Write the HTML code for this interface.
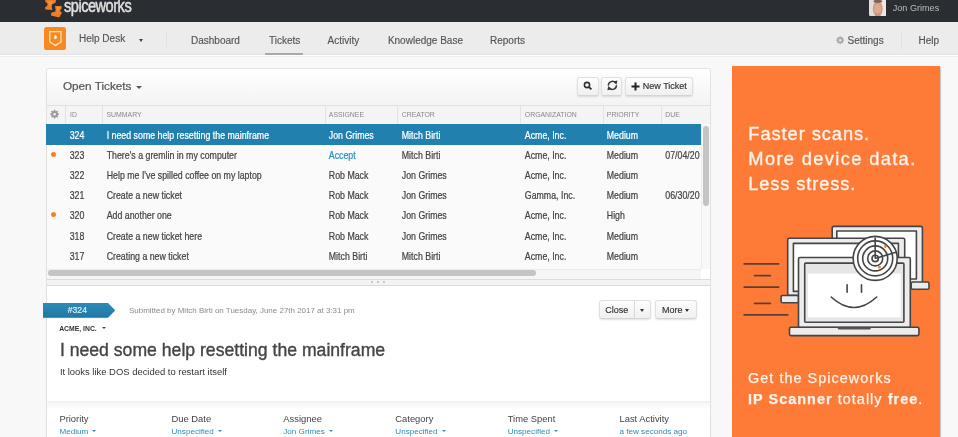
<!DOCTYPE html>
<html><head><meta charset="utf-8">
<style>
*{box-sizing:border-box;margin:0;padding:0}
html,body{width:958px;height:437px;overflow:hidden}
#wrap{position:absolute;left:0;top:0;width:958px;height:437px;filter:blur(0.3px)}
body{font-family:"Liberation Sans",sans-serif;background:#f8f8f8;position:relative;color:#333}
.a{position:absolute;white-space:nowrap}
#hdr{position:absolute;left:0;top:0;width:958px;height:22px;background:#2a2e32}
#nav{position:absolute;left:0;top:22px;width:958px;height:32.5px;background:#ececec;border-bottom:0.8px solid #e2e2e2}
#navline{position:absolute;left:0;top:55px;width:958px;height:1.4px;background:#fff}
#navsh{position:absolute;left:0;top:56.4px;width:958px;height:1px;background:#eeeeee}
.nv{position:absolute;font-size:10px;line-height:12px;color:#555;white-space:nowrap;margin-top:1px;-webkit-text-stroke:0.15px #555}
#panel{position:absolute;left:46px;top:68px;width:665px;height:390px;background:#fff;border:1px solid #e2e2e2;border-radius:3px;box-shadow:0 0 1px rgba(0,0,0,.05)}
#phead{position:absolute;left:47px;top:69px;width:663px;height:37px;background:linear-gradient(#fff,#f3f3f3);border-bottom:1px solid #e2e2e2;border-radius:3px 3px 0 0}
#colh{position:absolute;left:47px;top:106px;width:663px;height:17.5px;background:#f4f4f4}
.sep{position:absolute;top:106px;width:1px;height:17.5px;background:#e3e3e3}
.chx{position:absolute;top:106px;line-height:17.5px;font-size:6.9px;color:#888;white-space:nowrap;transform:scaleY(1.14);transform-origin:0 55%;margin-top:0.3px}
#tbody{position:absolute;left:47px;top:123.5px;width:653.5px;height:145px;background:#fafafa}
.row{position:absolute;left:46px;width:654.5px}
.row.sel{background:#2180ae}
.ct{position:absolute;font-size:8.8px;line-height:20.2px;color:#444;white-space:nowrap;margin-top:2.2px;-webkit-text-stroke-width:0.2px;transform:scaleY(1.15);transform-origin:0 54%}
.ct.w{color:#fff}
.ct.acc{color:#2a8bc4}
.dot{position:absolute;left:51px;width:5.4px;height:5.4px;border-radius:50%;background:#fb7d2a}
#vtrack{position:absolute;left:700.5px;top:123.5px;width:9.5px;height:145px;background:#f8f8f8;border-left:1px solid #ececec}
#vthumb{position:absolute;left:703.4px;top:126px;width:5.6px;height:80px;border-radius:3px;background:#c4c4c4}
#htrack{position:absolute;left:47px;top:268.5px;width:653.5px;height:10.5px;background:#f6f6f6;border-top:1px solid #ececec}
#hthumb{position:absolute;left:48px;top:270.2px;width:488px;height:6px;border-radius:3px;background:#c4c4c4}
#corner{position:absolute;left:700.5px;top:268.5px;width:9.5px;height:10.5px;background:#fff}
#resz{position:absolute;left:47px;top:279px;width:663px;height:6.5px;background:#f3f3f3;border-top:1px solid #dcdcdc;border-bottom:1px solid #dcdcdc}
.rdot{position:absolute;top:281.3px;width:2.2px;height:2.2px;background:#bbb;border-radius:50%}
.btn{position:absolute;border:1px solid #e0e0e0;border-bottom-color:#d4d4d4;border-radius:3px;background:linear-gradient(#fdfdfd,#f0f0f0);box-shadow:0 1px 2px rgba(0,0,0,.12)}
.bt{position:absolute;font-size:9px;line-height:12px;color:#333;white-space:nowrap;-webkit-text-stroke:0.15px #333}
#ad{position:absolute;left:731.5px;top:66.2px;width:208.7px;height:380px;background:#fe7a37;box-shadow:1px 1px 1px rgba(0,0,0,.18)}
.adt{position:absolute;left:748.3px;color:#fff3ea;white-space:nowrap;font-size:18.3px;line-height:20px;letter-spacing:1.35px;-webkit-text-stroke:0.35px #fff3ea}
.adb{position:absolute;left:748px;color:#fff3ea;white-space:nowrap;font-size:14.4px;line-height:16px;letter-spacing:1.05px;-webkit-text-stroke:0.25px #fff3ea}
.fl{position:absolute;font-size:9.4px;line-height:12px;color:#444;white-space:nowrap}
.fv{position:absolute;font-size:8.1px;line-height:10px;color:#2a8bc4;white-space:nowrap;margin-top:0.5px}
.caret{position:absolute;width:0;height:0;border-left:2.6px solid transparent;border-right:2.6px solid transparent;border-top:2.8px solid #444}
.ic{display:inline-block;vertical-align:middle;width:0;height:0;border-left:2.5px solid transparent;border-right:2.5px solid transparent;border-top:2.6px solid #2a8bc4;margin-left:4px;margin-top:-1px}
</style></head><body><div id="wrap">
<!-- header -->
<div id="hdr"></div>
<svg class="a" style="left:40px;top:0" width="24" height="20" viewBox="40 0 24 20">
 <g fill="#ee7d2a">
  <path d="M45.2 0 L56 0 L55.6 2.8 L52.2 4.2 L51.6 6.5 L52.4 9.9 L45.4 9.6 L45 7.6 L47.6 5.2 L47.2 3 L45.5 2.2 Z"/>
  <path d="M55 6.1 L61.8 5.9 L61.4 9 L59.8 10.6 L62 12.8 L59.2 17.6 L51 15.4 L51.2 12.8 L55.4 11.6 L55.6 9.6 Z"/>
 </g>
 <g fill="#f6a23a" opacity=".55"><path d="M48 1 L53 1 L50 8 Z"/><path d="M57 7 L60 7 L57 14 Z"/></g>
</svg>
<div class="a" style="left:64px;top:-2px;font-size:14.6px;line-height:18px;color:#e0e0e0;letter-spacing:-0.5px;-webkit-text-stroke:0.4px #e0e0e0;transform:scaleY(1.2);transform-origin:0 13.6px">spiceworks</div>
<svg class="a" style="left:869px;top:0" width="17.2" height="16.4" viewBox="0 0 17.2 16.4"><defs><clipPath id="av"><rect x="0" y="-2" width="17.2" height="18.4" rx="2.2"/></clipPath></defs><g clip-path="url(#av)"><rect x="0" y="-2" width="17.2" height="18.4" fill="#e2ddd8"/><rect x="11" y="-2" width="6.2" height="18.4" fill="#ebe8e4"/><ellipse cx="8.8" cy="8.8" rx="5" ry="7.4" fill="#cf9d82"/><ellipse cx="8.8" cy="1.3" rx="4.4" ry="1.5" fill="#7a6355"/><ellipse cx="8.8" cy="9" rx="3.6" ry="5" fill="#d9ab90"/><rect x="6" y="13.5" width="5.6" height="4" fill="#c99479"/></g></svg>
<div class="a" style="left:892.7px;top:2.5px;font-size:9.1px;line-height:11px;color:#b9babb">Jon Grimes</div>

<!-- nav -->
<div id="nav"></div>
<div id="navline"></div>
<div id="navsh"></div>
<div class="a" style="left:43.8px;top:27.1px;width:22.7px;height:22.7px;border-radius:2.5px;background:#f68a20"></div>
<svg class="a" style="left:43.8px;top:27.1px" width="23" height="23" viewBox="0 0 23 23">
 <path d="M5.8 4.6 H17 V15 L11.4 18.4 L5.8 15 Z" fill="none" stroke="#fde3c8" stroke-width="1.3"/>
 <path d="M11.4 7.6 C12.4 9 12.8 9.8 12.8 10.6 A1.4 1.4 0 0 1 10 10.6 C10 9.8 10.4 9 11.4 7.6 Z" fill="#fff"/>
</svg>
<div class="nv" style="left:79px;top:31.6px">Help Desk</div>
<div class="caret" style="left:138.6px;top:38.6px;border-left-width:2.8px;border-right-width:2.8px;border-top-width:3px;border-top-color:#444"></div>
<div class="a" style="left:166.3px;top:31px;width:1px;height:16px;background:#e2e2e2"></div>
<div class="nv" style="left:191px;top:33.5px">Dashboard</div>
<div class="nv" style="left:269px;top:33.5px">Tickets</div>
<div class="a" style="left:265.4px;top:52.5px;width:38px;height:2px;background:#a9a9a9"></div>
<div class="nv" style="left:327.6px;top:33.5px">Activity</div>
<div class="nv" style="left:387.9px;top:33.5px">Knowledge Base</div>
<div class="nv" style="left:490px;top:33.5px">Reports</div>
<svg class="a" style="left:830px;top:30px" width="20" height="20" viewBox="830 30 20 20"><path d="M844.14 39.50 L844.14 40.90 L843.23 40.86 L842.81 41.87 L843.48 42.49 L842.49 43.48 L841.87 42.81 L840.86 43.23 L840.90 44.14 L839.50 44.14 L839.54 43.23 L838.53 42.81 L837.91 43.48 L836.92 42.49 L837.59 41.87 L837.17 40.86 L836.26 40.90 L836.26 39.50 L837.17 39.54 L837.59 38.53 L836.92 37.91 L837.91 36.92 L838.53 37.59 L839.54 37.17 L839.50 36.26 L840.90 36.26 L840.86 37.17 L841.87 37.59 L842.49 36.92 L843.48 37.91 L842.81 38.53 L843.23 39.54 Z" fill="#a8a8a8"/><circle cx="840.2" cy="40.2" r="1.2" fill="#ececec"/></svg>
<div class="nv" style="left:847.5px;top:34px">Settings</div>
<div class="a" style="left:901px;top:31px;width:1px;height:18px;background:#e2e2e2"></div>
<div class="nv" style="left:918.5px;top:34px">Help</div>

<!-- panel -->
<div id="panel"></div>
<div id="phead"></div>
<div class="a" style="left:62.9px;top:79.4px;font-size:11.75px;line-height:14px;color:#555;-webkit-text-stroke:0.2px #555">Open Tickets</div>
<div class="caret" style="left:136.4px;top:86.2px;border-left-width:3px;border-right-width:3px;border-top-width:3.2px;border-top-color:#555"></div>

<div class="btn" style="left:577px;top:76.6px;width:21.7px;height:19.3px"></div>
<svg class="a" style="left:583px;top:81px" width="10" height="10" viewBox="0 0 10 10"><circle cx="4" cy="4" r="2.6" fill="none" stroke="#333" stroke-width="1.6"/><path d="M5.8 5.8 L8.4 8.4" stroke="#333" stroke-width="1.9"/></svg>
<div class="btn" style="left:601.3px;top:76.6px;width:21.2px;height:19.3px"></div>
<svg class="a" style="left:600px;top:76px" width="24" height="20" viewBox="600 76 24 20"><g fill="none" stroke="#3a3a3a" stroke-width="1.5"><path d="M615.6 83.0 A4 4 0 0 0 608.4 85.6"/><path d="M609.2 87.8 A4 4 0 0 0 616.4 85.2"/></g><path d="M613.2 81.6 L617.4 80.6 L616.6 84.8 Z M611.6 89.2 L607.4 90.2 L608.2 86 Z" fill="#3a3a3a"/></svg>
<div class="btn" style="left:624.8px;top:76.6px;width:67.8px;height:19.3px"></div>
<svg class="a" style="left:631px;top:82px" width="9" height="9" viewBox="0 0 9 9"><path d="M4.5 0.5 V8.5 M0.5 4.5 H8.5" stroke="#222" stroke-width="2"/></svg>
<div class="bt" style="left:642.8px;top:80px">New Ticket</div>

<div id="colh"></div>
<div class="sep" style="left:65.4px"></div>
<div class="sep" style="left:102.3px"></div>
<div class="sep" style="left:324.5px"></div>
<div class="sep" style="left:397.4px"></div>
<div class="sep" style="left:520.2px"></div>
<div class="sep" style="left:602.6px"></div>
<div class="sep" style="left:661.4px"></div>
<svg class="a" style="left:46px;top:106px" width="20" height="17" viewBox="46 106 20 17"><path d="M58.93 113.43 L58.93 114.97 L57.92 114.93 L57.46 116.03 L58.21 116.72 L57.12 117.81 L56.43 117.06 L55.33 117.52 L55.37 118.53 L53.83 118.53 L53.87 117.52 L52.77 117.06 L52.08 117.81 L50.99 116.72 L51.74 116.03 L51.28 114.93 L50.27 114.97 L50.27 113.43 L51.28 113.47 L51.74 112.37 L50.99 111.68 L52.08 110.59 L52.77 111.34 L53.87 110.88 L53.83 109.87 L55.37 109.87 L55.33 110.88 L56.43 111.34 L57.12 110.59 L58.21 111.68 L57.46 112.37 L57.92 113.47 Z" fill="#9a9a9a"/><circle cx="54.6" cy="114.2" r="1.3" fill="#f4f4f4"/></svg>
<div class="chx" style="left:70px">ID</div>
<div class="chx" style="left:106.5px">SUMMARY</div>
<div class="chx" style="left:328.8px">ASSIGNEE</div>
<div class="chx" style="left:401.8px">CREATOR</div>
<div class="chx" style="left:524.8px">ORGANIZATION</div>
<div class="chx" style="left:606.8px">PRIORITY</div>
<div class="chx" style="left:665.3px">DUE</div>

<div id="tbody"></div>
<div class="row sel" style="top:123.5px;height:21.5px"></div>
<div class="ct w" style="left:69.7px;top:123.5px">324</div>
<div class="ct w" style="left:106.7px;top:123.5px">I need some help resetting the mainframe</div>
<div class="ct w" style="left:328.8px;top:123.5px">Jon Grimes</div>
<div class="ct w" style="left:401.8px;top:123.5px">Mitch Birti</div>
<div class="ct w" style="left:524.8px;top:123.5px">Acme, Inc.</div>
<div class="ct w" style="left:606.8px;top:123.5px">Medium</div>
<div class="row" style="top:143.7px;height:20.2px"></div>
<div class="ct" style="left:69.7px;top:143.7px">323</div>
<div class="ct" style="left:106.7px;top:143.7px">There's a gremlin in my computer</div>
<div class="ct acc" style="left:328.8px;top:143.7px">Accept</div>
<div class="ct" style="left:401.8px;top:143.7px">Mitch Birti</div>
<div class="ct" style="left:524.8px;top:143.7px">Acme, Inc.</div>
<div class="ct" style="left:606.8px;top:143.7px">Medium</div>
<div class="ct" style="left:665.3px;top:143.7px">07/04/20</div>
<div class="dot" style="top:151.5px"></div>
<div class="row" style="top:163.9px;height:20.2px"></div>
<div class="ct" style="left:69.7px;top:163.9px">322</div>
<div class="ct" style="left:106.7px;top:163.9px">Help me I've spilled coffee on my laptop</div>
<div class="ct" style="left:328.8px;top:163.9px">Rob Mack</div>
<div class="ct" style="left:401.8px;top:163.9px">Jon Grimes</div>
<div class="ct" style="left:524.8px;top:163.9px">Acme, Inc.</div>
<div class="ct" style="left:606.8px;top:163.9px">Medium</div>
<div class="row" style="top:184.1px;height:20.2px"></div>
<div class="ct" style="left:69.7px;top:184.1px">321</div>
<div class="ct" style="left:106.7px;top:184.1px">Create a new ticket</div>
<div class="ct" style="left:328.8px;top:184.1px">Rob Mack</div>
<div class="ct" style="left:401.8px;top:184.1px">Jon Grimes</div>
<div class="ct" style="left:524.8px;top:184.1px">Gamma, Inc.</div>
<div class="ct" style="left:606.8px;top:184.1px">Medium</div>
<div class="ct" style="left:665.3px;top:184.1px">06/30/20</div>
<div class="row" style="top:204.3px;height:20.2px"></div>
<div class="ct" style="left:69.7px;top:204.3px">320</div>
<div class="ct" style="left:106.7px;top:204.3px">Add another one</div>
<div class="ct" style="left:328.8px;top:204.3px">Rob Mack</div>
<div class="ct" style="left:401.8px;top:204.3px">Jon Grimes</div>
<div class="ct" style="left:524.8px;top:204.3px">Acme, Inc.</div>
<div class="ct" style="left:606.8px;top:204.3px">High</div>
<div class="dot" style="top:212.1px"></div>
<div class="row" style="top:224.5px;height:20.2px"></div>
<div class="ct" style="left:69.7px;top:224.5px">318</div>
<div class="ct" style="left:106.7px;top:224.5px">Create a new ticket here</div>
<div class="ct" style="left:328.8px;top:224.5px">Rob Mack</div>
<div class="ct" style="left:401.8px;top:224.5px">Jon Grimes</div>
<div class="ct" style="left:524.8px;top:224.5px">Acme, Inc.</div>
<div class="ct" style="left:606.8px;top:224.5px">Medium</div>
<div class="row" style="top:244.7px;height:20.2px"></div>
<div class="ct" style="left:69.7px;top:244.7px">317</div>
<div class="ct" style="left:106.7px;top:244.7px">Creating a new ticket</div>
<div class="ct" style="left:328.8px;top:244.7px">Mitch Birti</div>
<div class="ct" style="left:401.8px;top:244.7px">Mitch Birti</div>
<div class="ct" style="left:524.8px;top:244.7px">Acme, Inc.</div>
<div class="ct" style="left:606.8px;top:244.7px">Medium</div>
<div id="vtrack"></div>
<div id="vthumb"></div>
<div id="htrack"></div>
<div id="hthumb"></div>
<div id="corner"></div>
<div id="resz"></div>
<div class="rdot" style="left:371.3px"></div>
<div class="rdot" style="left:376.9px"></div>
<div class="rdot" style="left:382.6px"></div>

<!-- detail -->
<svg class="a" style="left:43px;top:302.6px;overflow:visible" width="73" height="15" viewBox="0 0 73 15"><defs><linearGradient id="tg" x1="0" y1="0" x2="0" y2="1"><stop offset="0" stop-color="#2d8bb7"/><stop offset="1" stop-color="#1e78a4"/></linearGradient></defs><path d="M0 0.8 H65 L72.2 8.15 L65 15.5 H0 Z" fill="#000" opacity=".08"/><path d="M0 0 H65 L72.2 7.35 L65 14.7 H0 Z" fill="url(#tg)"/></svg>
<div class="a" style="left:67.8px;top:303.6px;font-size:8.6px;line-height:12px;color:#dfeef6;-webkit-text-stroke:0.2px #dfeef6">#324</div>
<div class="a" style="left:129px;top:304.5px;font-size:7.97px;line-height:12px;color:#8a8a8a">Submitted by Mitch Birti on Tuesday, June 27th 2017 at 3:31 pm</div>
<div class="a" style="left:59.2px;top:323.5px;font-size:6.84px;line-height:10px;color:#333;font-weight:bold">ACME, INC.</div>
<div class="caret" style="left:101.5px;top:327.3px;border-top-color:#444"></div>
<div class="a" style="left:59.9px;top:338.6px;font-size:17.64px;line-height:22px;color:#444;-webkit-text-stroke:0.35px #444">I need some help resetting the mainframe</div>
<div class="a" style="left:59.9px;top:365.5px;font-size:9.44px;line-height:12px;color:#333">It looks like DOS decided to restart itself</div>

<div class="btn" style="left:599.4px;top:300px;width:52px;height:19.2px"></div>
<div class="a" style="left:634.3px;top:301px;width:1px;height:16.8px;background:#d8d8d8"></div>
<div class="bt" style="left:605.3px;top:303.5px">Close</div>
<div class="caret" style="left:640.4px;top:308.6px;border-left-width:2.8px;border-right-width:2.8px;border-top-width:3px;border-top-color:#333"></div>
<div class="btn" style="left:655.4px;top:300px;width:41.7px;height:19.2px"></div>
<div class="bt" style="left:662px;top:303.5px">More</div>
<div class="caret" style="left:685px;top:308.6px;border-left-width:2.8px;border-right-width:2.8px;border-top-width:3px;border-top-color:#333"></div>

<div class="a" style="left:47px;top:401.3px;width:663px;height:40px;background:linear-gradient(#ededed,#f6f6f6 2px,#fdfdfd 7px,#fff 9px)"></div>
<div class="fl" style="left:59.4px;top:413px">Priority</div>
<div class="fv" style="left:59.4px;top:426px">Medium<span class="ic"></span></div>
<div class="fl" style="left:171.5px;top:413px">Due Date</div>
<div class="fv" style="left:171.5px;top:426px">Unspecified<span class="ic"></span></div>
<div class="fl" style="left:283.3px;top:413px">Assignee</div>
<div class="fv" style="left:283.3px;top:426px">Jon Grimes<span class="ic"></span></div>
<div class="fl" style="left:395.3px;top:413px">Category</div>
<div class="fv" style="left:395.3px;top:426px">Unspecified<span class="ic"></span></div>
<div class="fl" style="left:507.7px;top:413px">Time Spent</div>
<div class="fv" style="left:507.7px;top:426px">Unspecified<span class="ic"></span></div>
<div class="fl" style="left:619.5px;top:413px">Last Activity</div>
<div class="fv" style="left:619.5px;top:426px">a few seconds ago</div>

<!-- ad -->
<div id="ad"></div>
<div class="adt" style="top:123.8px;letter-spacing:0.93px">Faster scans.</div>
<div class="adt" style="top:148.8px">More device data.</div>
<div class="adt" style="top:173.8px;letter-spacing:0.86px">Less stress.</div>
<svg class="a" style="left:740px;top:220px" width="200" height="120" viewBox="740 220 200 120">
 <g stroke="#5a4034" stroke-width="1.8" stroke-linecap="round">
  <path d="M744.2 263.8 H778.6 M754.6 275.7 H770.3 M744.2 287.1 H778.6 M754.6 303.4 H770.3 M744.2 314.9 H787.6"/>
 </g>
 <g stroke="#454545" stroke-width="1.6" stroke-linejoin="round">
  <!-- back laptop -->
  <rect x="832.2" y="226.4" width="90.2" height="57" rx="1.5" fill="#ececec"/>
  <rect x="836.8" y="231" width="79.6" height="48" fill="#fff"/>
  <rect x="911.2" y="282" width="17.8" height="7.2" rx="1.5" fill="#ececec"/>
  <!-- middle laptop -->
  <rect x="787.7" y="238.3" width="117" height="57" rx="1.5" fill="#ececec"/>
  <rect x="793.4" y="243.4" width="105" height="48" fill="#fff"/>
  <rect x="781.1" y="295.5" width="17.4" height="7.3" rx="1.5" fill="#ececec"/>
  <!-- front laptop -->
  <rect x="798.5" y="257.5" width="111.8" height="70" rx="1.5" fill="#ececec"/>
  <rect x="804.7" y="263.1" width="99.2" height="59.1" rx="1" fill="#e6e6e6"/>
  <rect x="789.5" y="327.2" width="129.4" height="8.4" rx="1.5" fill="#ececec"/>
  <path d="M837 327.6 H871.5 L870 329.5 H838.5 Z" fill="#555" stroke="none"/>
 </g>
 <rect x="807.8" y="273.6" width="92.9" height="43.8" fill="#fff"/>
 <g stroke="#454545" stroke-width="1.6" fill="none" stroke-linecap="round">
  <path d="M847.1 284.8 V292.2 M861.5 284.8 V292.2"/>
  <path d="M831.2 297 Q854 318 876.7 297"/>
 </g>
 <!-- radar -->
 <g stroke="#454545" stroke-width="1.6" fill="none">
  <circle cx="875.2" cy="258.4" r="22" fill="#fff"/>
  <circle cx="875.2" cy="258.4" r="17.5"/>
  <circle cx="875.2" cy="258.4" r="12.5"/>
  <circle cx="875.2" cy="258.4" r="7.5"/>
  <circle cx="875.2" cy="258.4" r="3.2"/>
  <path d="M875.2 258.4 V237.4 M875.2 258.4 L897 252"/>
 </g>
 <circle cx="885.3" cy="246.5" r="1.4" fill="#fb7d2a"/>
 <circle cx="879.4" cy="267.2" r="1.4" fill="#fb7d2a"/>
</svg>
<div class="adb" style="top:370px">Get the Spiceworks</div>
<div class="adb" style="top:391px"><b>IP Scanner</b> totally <b>free</b>.</div>
</div></body></html>
